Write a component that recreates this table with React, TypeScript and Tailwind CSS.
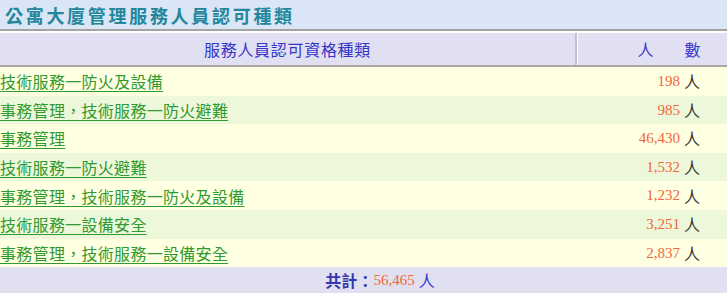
import React from "react";

const rows: { name: string; count: string }[] = [
  { name: "技術服務一防火及設備", count: "198" },
  { name: "事務管理，技術服務一防火避難", count: "985" },
  { name: "事務管理", count: "46,430" },
  { name: "技術服務一防火避難", count: "1,532" },
  { name: "事務管理，技術服務一防火及設備", count: "1,232" },
  { name: "技術服務一設備安全", count: "3,251" },
  { name: "事務管理，技術服務一設備安全", count: "2,837" },
];

const cjk = { fontFamily: '"Noto Sans CJK TC", "Noto Sans CJK SC", sans-serif' };
const serif = { fontFamily: '"Liberation Serif", "Noto Sans CJK TC", serif' };

export default function App() {
  return (
    <div className="w-[727px] h-[293px] overflow-hidden bg-white" style={cjk}>
      <div className="w-[760px]">
        <div className="h-[31px] bg-[#dae5f6] flex items-center pl-[5px] border-b-2 border-[#a3a3a3]">
          <span className="text-[18px] font-bold tracking-[2.7px] text-[#23879c] leading-none">
            公寓大廈管理服務人員認可種類
          </span>
        </div>
        <div className="h-[2px] bg-white" />
        <div className="grid grid-cols-[577px_1fr] h-[34px] bg-[#e0e0f2] border-b-2 border-[#a8a8a8] text-[#3535c8] text-[16px]">
          <div className="flex items-center justify-center border-r-2 border-r-[#c0c0c8] tracking-[0.7px]">
            服務人員認可資格種類
          </div>
          <div className="flex items-center justify-center gap-[31px] border-l border-l-white">
            <span>人</span>
            <span>數</span>
          </div>
        </div>
        {rows.map((r, i) => (
          <div
            key={i}
            className={`grid grid-cols-[577px_1fr] h-[28.6px] items-center ${
              i % 2 === 0 ? "bg-[#ffffe2]" : "bg-[#edf8da]"
            }`}
          >
            <a className="text-[16px] tracking-[0.3px] text-[#2f9a2f] underline underline-offset-[3px] leading-none" href="#">
              {r.name}
            </a>
            <div className="flex justify-end items-center pr-[60px] gap-[4px]">
              <span className="text-[15px] text-[#f2663c]" style={serif}>
                {r.count}
              </span>
              <span className="text-[16px] text-[#333]">人</span>
            </div>
          </div>
        ))}
        <div className="h-[26px] bg-[#e0e0f0] flex items-center justify-center text-[16px]">
          <span className="text-[#3535b0] font-bold">共計：</span>
          <span className="text-[15px] text-[#f2663c]" style={serif}>56,465</span>
          <span className="text-[16px] text-[#3535c8] ml-[4px]">人</span>
        </div>
      </div>
    </div>
  );
}
